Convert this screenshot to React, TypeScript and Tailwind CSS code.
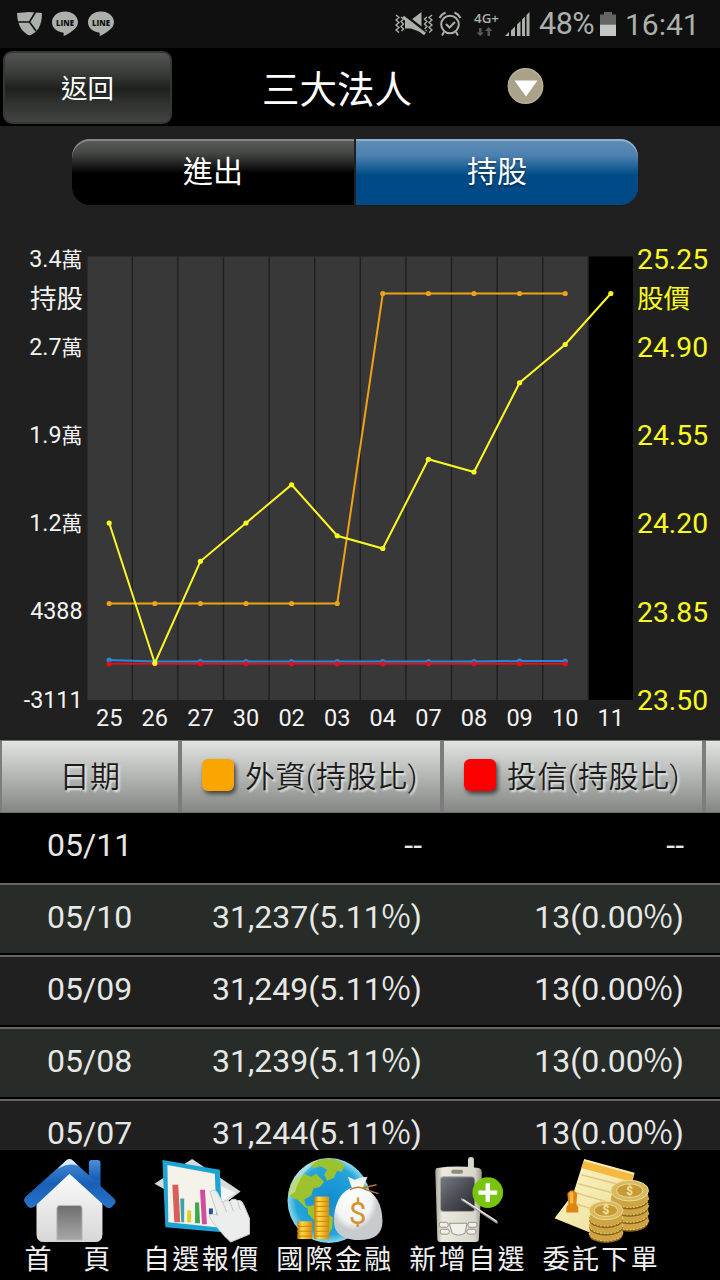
import React from "react";

const prices = [24.2, 23.65, 24.05, 24.2, 24.35, 24.15, 24.1, 24.45, 24.4, 24.75, 24.9, 25.1];
const days = ["25", "26", "27", "30", "02", "03", "04", "07", "08", "09", "10", "11"];
const foreign = [397.5, 397.5, 397.5, 397.5, 397.5, 397.5, 87.5, 87.5, 87.5, 87.5, 87.5];
const dealers = [454, 455.5, 455.5, 455.5, 455.5, 455.5, 455.5, 455.5, 455.5, 455, 455];
const trusts = Array.from({ length: 11 }, () => 457.8);
const leftAxis = ["3.4萬", "2.7萬", "1.9萬", "1.2萬", "4388", "-3111"];
const rightAxis = ["25.25", "24.90", "24.55", "24.20", "23.85", "23.50"];
const rows = [
  ["05/11", "--", "--"],
  ["05/10", "31,237(5.11%)", "13(0.00%)"],
  ["05/09", "31,249(5.11%)", "13(0.00%)"],
  ["05/08", "31,239(5.11%)", "13(0.00%)"],
  ["05/07", "31,244(5.11%)", "13(0.00%)"],
];

const xAt = (i: number) => 109.2 + i * 45.6;
const priceY = (p: number) => 87.5 + (25.1 - p) * 255;

function Line({ ys, color }: { ys: number[]; color: string }) {
  return (
    <g>
      <polyline points={ys.map((y, i) => `${xAt(i)},${y}`).join(" ")} fill="none" stroke={color} strokeWidth="2" />
      {ys.map((y, i) => (
        <circle key={i} cx={xAt(i)} cy={y} r="2.6" fill={color} />
      ))}
    </g>
  );
}

function Chart() {
  return (
    <svg width="720" height="534" viewBox="0 0 720 534" className="block shrink-0">
      <rect x="87.5" y="50.5" width="501" height="443.5" fill="#383838" />
      <rect x="588.5" y="50.5" width="44.5" height="443.5" fill="#000" />
      {Array.from({ length: 11 }, (_, i) => (
        <line key={i} x1={132.3 + i * 45.6} x2={132.3 + i * 45.6} y1="50.5" y2="494" stroke="#202020" strokeWidth="1.4" />
      ))}
      <Line ys={foreign} color="#eda315" />
      <Line ys={dealers} color="#2488e0" />
      <Line ys={trusts} color="#df1119" />
      <Line ys={prices.map(priceY)} color="#fafa22" />
      <g fill="#f2f2f2" fontSize="23.3" textAnchor="end">
        {leftAxis.map((t, i) => (
          <text key={t} x="82.500" y={60.5 + i * 88.2}>
            {t.replace("萬", "")}
            {t.endsWith("萬") && <tspan fontSize="21">萬</tspan>}
          </text>
        ))}
        <text x="83" y="101.5" fontSize="26.5">持股</text>
      </g>
      <g fill="#f2f2f2" fontSize="23.5" textAnchor="middle">
        {days.map((t, i) => (
          <text key={t} x={xAt(i)} y="519.5">{t}</text>
        ))}
      </g>
      <g fill="#fafa22" fontSize="28.3">
        {rightAxis.map((t, i) => (
          <text key={t} x="637" y={62.7 + i * 88.2}>{t}</text>
        ))}
        <text x="637" y="101.5" fontSize="26.5">股價</text>
      </g>
    </svg>
  );
}

function LineBubble() {
  return (
    <svg width="28" height="26" viewBox="0 0 28 26" className="block">
      <path d="M14 0.500C6.800.5 1 5.200 1 11.200c0 5.200 4.300 9.500 10.800 10.300 1.100.2 1 .9.800 3.500 4.800-1.900 14.400-7.300 14.400-13.800C27 5.200 21.200.5 14 .5z" fill="#abb0ab" />
      <text x="5" y="14.500" fontSize="8.600" fontWeight="800" fontFamily="Open Sans" textLength="18" lengthAdjust="spacingAndGlyphs" fill="#111">LINE</text>
    </svg>
  );
}

function StatusBar() {
  return (
    <div className="flex h-12 shrink-0 items-center bg-[#101010] pl-4 text-[#abb0ab]">
      <svg width="28" height="28" viewBox="0 0 28 28">
        <path d="M1 3l12-1 13 1c0 6-1 11-3.500 15.500C20 22 16 24.500 13.500 25.500 8 23 1.500 18 1 3z" fill="currentColor" />
        <path d="M1 12h12.500l6-10M13.500 12l6.500 9" stroke="#101010" strokeWidth="1.600" fill="none" />
      </svg>
      <div className="ml-[7px]"><LineBubble /></div>
      <div className="ml-2"><LineBubble /></div>
      <svg width="38" height="26" viewBox="0 0 38 26" className="ml-[280px]" fill="none" stroke="currentColor" strokeWidth="1.400">
        <path d="M1 4l3 2.500-3 2.500 3 2.500-3 2.500 3 2.500-3 2.500 3 2.500M6 6l2.500 2-2.500 2.500 2.500 2.500-2.500 2.500 2.500 2.500-2 2M37 4l-3 2.500 3 2.500-3 2.500 3 2.500-3 2.500 3 2.500-3 2.500M32 6l-2.500 2 2.500 2.500-2.500 2.500 2.500 2.500-2.500 2.500 2 2" />
        <path d="M10 9h6l10.500-8v20.500l-10.500-4h-6z" fill="currentColor" stroke="none" />
        <path d="M8 3l22 17" stroke="#101010" strokeWidth="3" />
        <path d="M8 6l22 17" strokeWidth="3.200" />
      </svg>
      <svg width="24" height="26" viewBox="0 0 24 26" className="ml-[5px]" fill="none" stroke="currentColor" strokeWidth="2">
        <circle cx="12" cy="13.500" r="8.800" />
        <path d="M8 13l3.500 3.500L17 11M1.500 7C3 4 5 2.500 7.500 1.500M16.500 1.500C19 2.500 21 4 22.500 7M6 21l-2 3.500M18 21l2 3.500" />
      </svg>
      <svg width="28" height="26" viewBox="0 0 28 26" className="ml-[11px]">
        <text x="1" y="11.500" fontSize="12.500" fontWeight="600" textLength="25" lengthAdjust="spacingAndGlyphs" fill="currentColor" fontFamily="Open Sans">4G+</text>
        <path d="M8.500 17v4.500h2.500L7.200 25 3.500 21.500h2.500V17zM14.500 25v-5H12l3.700-4 3.700 4H17v5z" fill="#585858" />
      </svg>
      <svg width="26" height="26" viewBox="0 0 26 26" className="ml-[3px]" fill="currentColor">
        <path d="M1 25l4-4v4zM7 19.500l4-4V25H7zM13 13.500l3.500-3.500v15H13zM18 8.500L21 5.500V25h-3zM22.500 4L25.500 1v24h-3z" />
      </svg>
      <span className="ml-[9px] w-[56px] whitespace-nowrap text-[30.5px] tracking-[-0.5px]">48%</span>
      <svg width="18" height="26" viewBox="0 0 18 26" className="ml-[4px]">
        <path d="M1 3.500h4V1h8v2.500h4v10H1z" fill="#626562" />
        <rect x="1" y="13.500" width="16" height="11.500" fill="#c3c8c3" />
      </svg>
      <span className="ml-[8px] whitespace-nowrap text-[30px]">16:41</span>
    </div>
  );
}

function HomeIcon() {
  return (
    <svg width="97" height="92" viewBox="0 0 100 92" preserveAspectRatio="none">
      <defs>
        <linearGradient id="roof" x1="0" y1="0" x2="0" y2="1"><stop offset="0" stopColor="#4a8fd9" /><stop offset=".5" stopColor="#195fb5" /><stop offset="1" stopColor="#2873ca" /></linearGradient>
        <linearGradient id="wall" x1="0" y1="0" x2="0" y2="1"><stop offset="0" stopColor="#fff" /><stop offset="1" stopColor="#d6d7d6" /></linearGradient>
        <linearGradient id="door" x1="0" y1="0" x2="0" y2="1"><stop offset="0" stopColor="#6e6e6e" /><stop offset="1" stopColor="#a7a7a7" /></linearGradient>
      </defs>
      <rect x="71" y="3" width="12" height="37" rx="3" fill="url(#roof)" />
      <path d="M17 40L51 10l34 30v38q0 8-8 8H25q-8 0-8-8z" fill="url(#wall)" />
      <path d="M47 4q4-4 8 0l42 38q3 3 0 6l-3 3q-3 2-6-1L51 17 15 50q-4 3-7 0l-3-4q-2-3 1-6z" fill="url(#roof)" />
      <path d="M47 4q4-4 8 0l5 5Q51 5 39 12z" fill="#dceaf8" />
      <path d="M38 84V52q0-3 3-3h20q3 0 3 3v32z" fill="url(#door)" stroke="#bbb" />
    </svg>
  );
}

function QuoteIcon() {
  return (
    <svg width="100" height="92" viewBox="0 0 100 92">
      <path d="M2 27L40 2l49 33-31 23z" fill="#d7dada" />
      <path d="M66 28l18 8-22 16z" fill="#f4f6f6" />
      <path d="M10 3l58 10 3 63-58-5z" fill="#1aa5d5" />
      <path d="M15 8l48 9 2 54-49-5z" fill="#f5f2ea" />
      <path d="M20 28h6l2 38h-6z" fill="#d9605a" />
      <path d="M28 42h4v24h-3z" fill="#38a6a8" />
      <path d="M35 54h4v12h-4z" fill="#e2ce28" />
      <path d="M43 46h4l1 21h-5z" fill="#39a94d" />
      <path d="M48 33h5l2 35h-5z" fill="#d34ba1" />
      <path d="M57 52h4v6h-4z" fill="#244eac" />
      <path d="M58 35q4-3 7 0l6 11q3-4 7-1 3-4 8-1 4-1 6 4l6 14v16l-19 8q-7-6-13-14-5-5-9-12 3-4 9-1z" fill="#eceeed" stroke="#c9cbca" strokeWidth="1" />
      <path d="M71 46l4 10M78 45l4 10M86 45l3 9" stroke="#c4c6c5" fill="none" />
    </svg>
  );
}

function FinanceIcon() {
  return (
    <svg width="100" height="92" viewBox="0 0 100 92">
      <defs>
        <radialGradient id="globe"><stop offset="0" stopColor="#118bd0" /><stop offset=".8" stopColor="#25a5d9" /><stop offset="1" stopColor="#8ddbed" /></radialGradient>
        <linearGradient id="gold"><stop offset="0" stopColor="#c77808" /><stop offset=".3" stopColor="#ffdc47" /><stop offset="1" stopColor="#d68b0b" /></linearGradient>
        <radialGradient id="bag" cx=".4" cy=".35"><stop offset="0" stopColor="#fff" /><stop offset=".75" stopColor="#f2f3f3" /><stop offset="1" stopColor="#c7cbcd" /></radialGradient>
      </defs>
      <ellipse cx="44" cy="44" rx="42" ry="43" fill="url(#globe)" />
      <path d="M10 21l9-4 7 3 5-3 8 8-4 5-7 2-2 7-7 4 1 5 5 4-5-1-7-7-10-5q0-9 7-18zM24 7q10-6 24-5 8 2 12 6l-3 7-5-1-3 7-7 3-3-6 3-5-7-4-6 2zM22 50l9-2 6 7 11 6-1 11-7 12-8-5-2-14-7-7zM72 23l7 3 5 12-8-1z" fill="#9cc22e" />
      <path d="M3 40Q5 12 35 2 14 16 10 35z" fill="#e9f7ee" opacity=".45" />
      <rect x="12" y="65" width="15" height="18" fill="url(#gold)" />
      <rect x="29" y="40" width="15" height="43" fill="url(#gold)" />
      <path d="M29 45h15M29 50h15M29 55h15M29 60h15M29 65h15M29 70h15M29 75h15M29 80h15M12 70h15M12 75h15M12 80h15" stroke="#c98413" />
      <path d="M67 31l-4-11 7 3 5-2 8-1-5 11c14 5 20 18 20 34 0 13-8 19-24 19S49 77 49 65c0-16 6-30 18-34z" fill="url(#bag)" />
      <path d="M65 33q9-5 16 0l13 4M79 31l13-3" stroke="#b9772d" strokeWidth="1.500" fill="none" />
      <text x="73" y="67.500" textAnchor="middle" fontSize="32" fill="#d59433">$</text>
    </svg>
  );
}

function PhoneIcon() {
  return (
    <svg width="100" height="92" viewBox="0 0 100 92">
      <defs>
        <linearGradient id="body"><stop offset="0" stopColor="#a9a69a" /><stop offset=".15" stopColor="#ece9df" /><stop offset=".85" stopColor="#d9d6cb" /><stop offset="1" stopColor="#99968b" /></linearGradient>
        <linearGradient id="screen" x1="0" y1="0" x2="1" y2="1"><stop offset="0" stopColor="#777c84" /><stop offset=".5" stopColor="#4b4e56" /><stop offset="1" stopColor="#25272c" /></linearGradient>
      </defs>
      <rect x="50" y="0" width="6" height="18" rx="3" fill="#d6d5ce" />
      <path d="M19 11q20-3 42 0 3 1 3 5l-3 67q0 3-3 3H22q-3 0-3-3l-2-68q0-4 2-4z" fill="url(#body)" />
      <rect x="33" y="13" width="12" height="4" rx="2" fill="#8d8b81" />
      <rect x="22" y="20" width="35" height="35" rx="3" fill="url(#screen)" stroke="#aaa89f" />
      <g fill="#f1efe8" stroke="#949187">
        <rect x="21" y="66" width="9" height="5" rx="2" /><rect x="50" y="66" width="9" height="5" rx="2" />
        <rect x="22" y="73" width="9" height="5" rx="2" /><rect x="49" y="73" width="9" height="5" rx="2" />
        <path d="M31 67h18l-2 10q-7 4-13 0z" />
      </g>
      <circle cx="70" cy="36" r="15.500" fill="#78c40e" />
      <path d="M70 26.500v19M60.500 36h19" stroke="#fff" strokeWidth="4.500" />
      <path d="M44 43l35 23" stroke="#9b9b94" strokeWidth="2.500" strokeLinecap="round" />
      <path d="M45 43l34 22" stroke="#f0efea" strokeWidth="1.300" />
    </svg>
  );
}

function Coins({ x, y, w, n }: { x: number; y: number; w: number; n: number }) {
  const r = w / 2;
  return (
    <g transform={`translate(${x} ${y})`}>
      {Array.from({ length: n }, (_, i) => n - i).map((k) => (
        <g key={k}>
          <ellipse cx={r} cy={k * 7.5 + 2} rx={r} ry={r * 0.5} fill="#8d6319" />
          <ellipse cx={r} cy={k * 7.5} rx={r} ry={r * 0.5} fill="#cda544" stroke="#eed17a" strokeDasharray="2 1.5" />
        </g>
      ))}
      <ellipse cx={r} cy="0" rx={r} ry={r * 0.55} fill="#d7b95f" stroke="#efdc91" />
      <ellipse cx={r} cy="0" rx={r * 0.7} ry={r * 0.36} fill="#c69b35" stroke="#f0dc95" />
      <text x={r} y="4" textAnchor="middle" fontSize="12" fontWeight="700" fill="#f5e3a2">$</text>
    </g>
  );
}

function OrderIcon() {
  return (
    <svg width="100" height="92" viewBox="0 0 100 92">
      <defs>
        <linearGradient id="paper" x1="0" y1="0" x2="1" y2="1"><stop offset="0" stopColor="#fff6c4" /><stop offset="1" stopColor="#e8dc96" /></linearGradient>
      </defs>
      <path d="M33 2l51 14-17 65L38 76 3 62l19-25z" fill="url(#paper)" />
      <path d="M33 4l50 14-2 7-51-14z" fill="#f6b83e" />
      <path d="M30 18l47 12M27 27l45 12M24 36l45 13M20 46l45 14" stroke="#e2c783" strokeWidth="1.500" />
      <path d="M16 37q5-7 10 0l-1 11 2 2v6H15v-6l2-2z" fill="#df8514" />
      <path d="M18 37q2-3 4 0v10h-3z" fill="#f9b845" />
      <Coins x={60} y={34} w={38} n={4} />
      <Coins x={38} y={54} w={34} n={3} />
    </svg>
  );
}

function Holding({ value }: { value: string }) {
  const [head, tail] = value.split("%");
  return tail === undefined ? (
    <>{value}</>
  ) : (
    <>
      {head}
      <span className="font-['Noto_Sans_CJK_TC',sans-serif] font-[350] leading-[0]">%</span>
      {tail}
    </>
  );
}

const nav = [
  { label: "首　頁", icon: <HomeIcon /> },
  { label: "自選報價", icon: <QuoteIcon /> },
  { label: "國際金融", icon: <FinanceIcon /> },
  { label: "新增自選", icon: <PhoneIcon /> },
  { label: "委託下單", icon: <OrderIcon /> },
];

export default function App() {
  return (
    <div className="flex h-[1280px] w-[720px] flex-col overflow-hidden bg-[#202020] font-['Roboto','Noto_Sans_CJK_TC',sans-serif] text-white">
      <StatusBar />
      <header className="flex h-[79px] shrink-0 items-start border-b border-[#202020] bg-black">
        <button className="ml-[3px] mt-[3px] h-[73px] w-[169px] rounded-[9px] border-2 border-[#353735] bg-[linear-gradient(#535553,#393b39_30%,#1e201e_52%,#303230_72%,#424442)] pt-0.5 text-[26.5px] leading-[67px]">返回</button>
        <h1 className="ml-[90px] w-[152px] whitespace-nowrap text-[37.5px] leading-[84px]">三大法人</h1>
        <svg width="38" height="38" viewBox="0 0 38 38" className="ml-[93px] mt-[19px]">
          <defs><linearGradient id="knob" x1="0" y1="0" x2="0" y2="1"><stop stopColor="#aaa187" /><stop offset="1" stopColor="#aaa38c" /></linearGradient></defs>
          <circle cx="18.500" cy="19" r="17.200" fill="url(#knob)" stroke="#b8af98" strokeWidth="1.500" />
          <path d="M7.500 13.500h23L19 29.500z" fill="#fff" />
        </svg>
      </header>

      <div className="flex h-[79px] shrink-0 pr-[82px] pl-[72px] pt-3">
        <div className="flex h-[66px] w-full gap-0.5 text-center text-[30px] leading-[62px]">
          <div className="flex-1 rounded-l-[18px] bg-[linear-gradient(#5d5f5d,#444644_22%,#000_52%)] pt-0.5 shadow-[inset_0_2px_0_#858685]">進出</div>
          <div className="flex-1 rounded-r-[18px] bg-[linear-gradient(#618fb7,#4c80ae_25%,#004b87_55%)] pt-0.5 shadow-[inset_0_2px_0_#8eb0cd] [text-shadow:0_2px_2px_#00000066]">持股</div>
        </div>
      </div>

      <Chart />

      <section className="flex h-[410px] shrink-0 flex-col overflow-hidden">
        <div className="flex h-[73px] shrink-0 border-y border-[#707170] bg-[linear-gradient(#e2e4e1,#858785)] text-[30px] font-[350] leading-[71px] tracking-[0.5px] text-[#1c1c1c] [text-shadow:2px_2px_2px_#e6e7e5]">
          <div className="w-[182px] border-r-4 border-l-2 border-[#7b7c7b] text-center">日期</div>
          <div className="flex w-[262px] items-center border-r-4 border-[#7b7c7b] pl-5">
            <span className="mr-[11px] size-8 -translate-y-0.5 rounded-md bg-[#faa500] shadow-[2px_3px_4px_#444]" />
            <span className="whitespace-nowrap">外資(持股比)</span>
          </div>
          <div className="flex w-[262px] items-center border-r-4 border-[#7b7c7b] pl-5">
            <span className="mr-[11px] size-8 -translate-y-0.5 rounded-md bg-[#fa0000] shadow-[2px_3px_4px_#444]" />
            <span className="whitespace-nowrap">投信(持股比)</span>
          </div>
        </div>
        {rows.map(([date, a, b], i) => (
          <div
            key={date}
            className={
              "flex shrink-0 text-[32px] leading-8 text-[#e6e8e6] " +
              (i === 0 ? "h-[70px] bg-black pt-4" : "h-[72px] border-t-2 border-b-2 border-t-[#646564] border-b-black pt-[16px] " + (i % 2 ? "bg-[#282c28]" : "bg-[#202020]"))
            }
          >
            <span className="h-8 w-[180px] pl-[47px]">{date}</span>
            <span className="h-8 w-[242px] text-right"><Holding value={a} /></span>
            <span className="h-8 w-[262px] text-right"><Holding value={b} /></span>
          </div>
        ))}
      </section>

      <nav className="flex h-[130px] shrink-0 bg-black pl-0.5">
        {nav.map(({ label, icon }) => (
          <div key={label} className="flex w-[133.2px] flex-col items-center pt-[7px]">
            {icon}
            <span className="-mt-[8px] whitespace-pre text-[27px] leading-[40px] tracking-[2.4px] text-[#f0f0f0]">{label}</span>
          </div>
        ))}
      </nav>
    </div>
  );
}
